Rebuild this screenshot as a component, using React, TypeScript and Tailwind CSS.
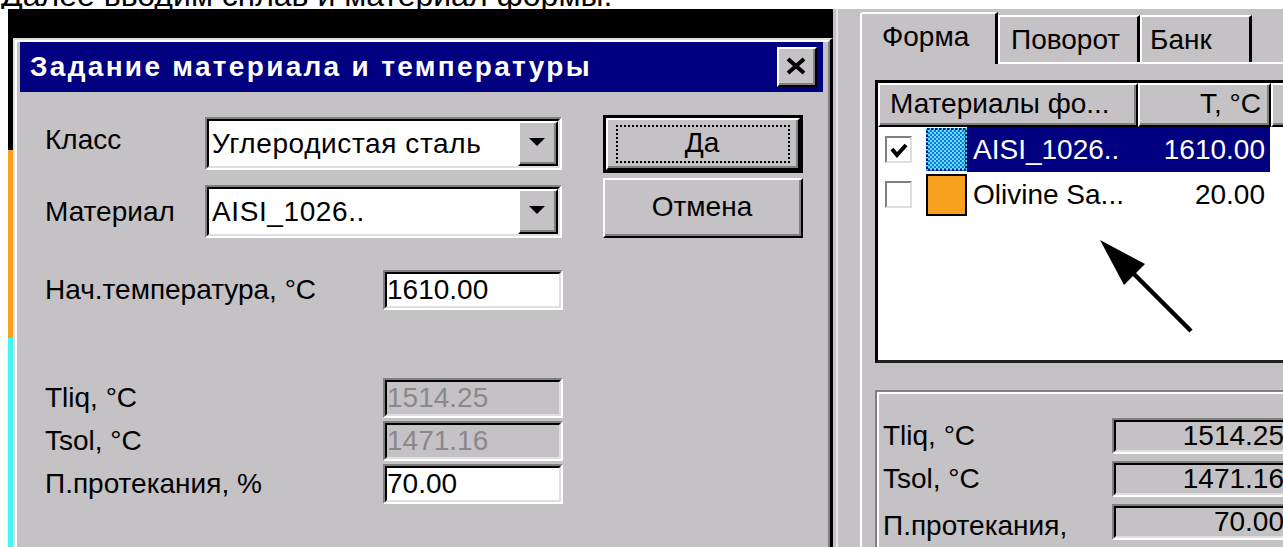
import type { ReactNode } from 'react'

// Classic 3D frames used all over the dialog
function Raised({ className = '', children }: { className?: string; children?: ReactNode }) {
  return (
    <div
      className={`border-t-2 border-l-2 border-r-2 border-b-2 border-t-white border-l-white border-r-black border-b-black ${className}`}
    >
      <div className="flex h-full w-full items-center justify-center border-r-2 border-b-2 border-r-[#808080] border-b-[#808080]">
        {children}
      </div>
    </div>
  )
}

function Sunken({ className = '', inner = '', children }: { className?: string; inner?: string; children?: ReactNode }) {
  return (
    <div
      className={`border-2 border-t-[#808080] border-l-[#808080] border-r-white border-b-white ${className}`}
    >
      <div
        className={`flex h-full w-full border-2 border-t-black border-l-black border-r-[#dfdfdf] border-b-[#dfdfdf] ${inner}`}
      >
        {children}
      </div>
    </div>
  )
}

function DropArrow() {
  return (
    <svg width="16" height="9" viewBox="0 0 16 9">
      <polygon points="0,0 16,0 8,8" fill="#000" />
    </svg>
  )
}

function Combo({ value }: { value: string }) {
  return (
    <Sunken className="h-[53px] w-[357px]" inner="bg-white">
      <span className="flex-1 self-center pl-[3px] tracking-[0.6px]">{value}</span>
      <Raised className="h-full w-[40px] bg-[#c4c2c5]">
        <DropArrow />
      </Raised>
    </Sunken>
  )
}

function Edit({ value, disabled, className = '' }: { value: string; disabled?: boolean; className?: string }) {
  return (
    <Sunken className={`h-[40px] w-[180px] ${className}`} inner={disabled ? 'bg-[#c4c2c5] text-[#8a888c]' : 'bg-white'}>
      <span className="self-center">{value}</span>
    </Sunken>
  )
}

function MaterialDialog() {
  return (
    <div className="flex-1 border-t-2 border-l-2 border-r-[3px] border-t-[#dfdfdf] border-l-[#dfdfdf] border-r-black bg-[#c4c2c5]">
      <div className="h-full border-t-2 border-l-2 border-r-2 border-t-white border-l-white border-r-[#808080] pl-[3px] pr-[5px]">
        {/* title bar */}
        <div className="flex h-[50px] items-center justify-between bg-[#000080] pl-[10px] pr-[6px]">
          <span className="text-[28px] font-bold tracking-[2.3px] text-white">Задание материала и температуры</span>
          <Raised className="h-[40px] w-[40px] bg-[#c4c2c5]">
            <svg width="22" height="18" viewBox="0 0 22 18">
              <path d="M3 2 L19 16 M19 2 L3 16" stroke="#000" strokeWidth="4" />
            </svg>
          </Raised>
        </div>

        <div className="pl-[25px] pt-[23px]">
          <div className="flex items-start">
            <div className="flex flex-col gap-[15px] pt-[2px]">
              <div className="flex items-center">
                <span className="w-[160px] -translate-y-[4px]">Класс</span>
                <Combo value="Углеродистая сталь" />
              </div>
              <div className="flex items-center">
                <span className="w-[160px]">Материал</span>
                <Combo value="AISI_1026.." />
              </div>
            </div>

            <div className="ml-[41px] flex w-[200px] flex-col gap-[5px]">
              <div className="h-[58px] border-[3px] border-black">
                <Raised className="relative h-full w-full bg-[#c4c2c5]">
                  <div className="absolute inset-x-[8px] inset-y-[5px] border-2 border-dotted border-black" />
                  <span>Да</span>
                </Raised>
              </div>
              <Raised className="h-[60px] w-full bg-[#c4c2c5]">
                <span>Отмена</span>
              </Raised>
            </div>
          </div>

          <div className="mt-[32px] flex items-center">
            <span className="w-[338px]">Нач.температура, °C</span>
            <Edit value="1610.00" />
          </div>

          <div className="mt-[68px] flex flex-col gap-[3px]">
            <div className="flex items-center">
              <span className="w-[338px]">Tliq, °C</span>
              <Edit value="1514.25" disabled />
            </div>
            <div className="flex items-center">
              <span className="w-[338px]">Tsol, °C</span>
              <Edit value="1471.16" disabled />
            </div>
            <div className="flex items-center">
              <span className="w-[338px]">П.протекания, %</span>
              <Edit value="70.00" />
            </div>
          </div>
        </div>
      </div>
    </div>
  )
}

function CheckBox({ checked }: { checked?: boolean }) {
  return (
    <div className="flex h-[27px] w-[27px] items-center justify-center border-2 border-t-[#808080] border-l-[#808080] border-r-[#dfdfdf] border-b-[#dfdfdf] bg-white">
      {checked && (
        <svg width="18" height="16" viewBox="0 0 18 16">
          <path d="M2 7 L7 13 L16 3" fill="none" stroke="#000" strokeWidth="4" />
        </svg>
      )}
    </div>
  )
}

function SteelSwatch() {
  return (
    <svg width="41" height="43" viewBox="0 0 41 43">
      <defs>
        <pattern id="dots" width="4" height="4" patternUnits="userSpaceOnUse">
          <rect width="4" height="4" fill="#1f6fe0" />
          <rect width="2" height="2" fill="#5fe6ff" />
          <rect x="2" y="2" width="2" height="2" fill="#5fe6ff" />
        </pattern>
      </defs>
      <rect width="41" height="43" fill="url(#dots)" />
      <rect x="1" y="1" width="39" height="41" fill="none" stroke="#0a1a60" strokeWidth="2" strokeDasharray="2 2" />
    </svg>
  )
}

function ReadOut({ value }: { value: string }) {
  return (
    <Sunken className="h-[36px] w-[182px]" inner="bg-[#c4c2c5] justify-end pr-[6px]">
      <span className="self-center">{value}</span>
    </Sunken>
  )
}

function FormPanel() {
  return (
    <div className="relative flex-1 overflow-hidden bg-[#c4c2c5] pl-[3px]">
      <div className="h-full border-l-2 border-l-[#e4e4e4] pl-[22px] pt-[3px]">
        {/* tabs */}
        <div className="flex h-[50px] items-end">
          <div className="relative z-10 -mb-[2px] flex h-[52px] w-[138px] shrink-0 items-center rounded-tl-[3px] border-t-2 border-l-2 border-r-[3px] border-t-white border-l-white border-r-black bg-[#c4c2c5] pb-[4px] pl-[20px]">
            Форма
          </div>
          <div className="flex h-[47px] w-[142px] shrink-0 items-center border-t-2 border-r-[3px] border-t-white border-r-black pl-[13px]">
            <span className="-ml-[13px] flex h-full items-center border-l-2 border-l-white pl-[11px]">Поворот</span>
          </div>
          <div className="flex h-[47px] w-[112px] shrink-0 items-center border-t-2 border-l-2 border-r-[3px] border-t-white border-l-white border-r-black pl-[8px]">
            Банк
          </div>
        </div>

        <div className="h-full border-t-2 border-l-2 border-t-white border-l-white pl-[13px] pt-[16px]">
          {/* material list */}
          <div className="relative h-[283px] w-[440px] border-[3px] border-t-black border-l-black border-b-[#202020] border-r-[#202020] bg-white">
            <div className="flex h-[44px] bg-[#c4c2c5]">
              <Raised className="h-full w-[260px] shrink-0">
                <span className="w-full pl-[10px]">Материалы фо...</span>
              </Raised>
              <Raised className="h-full w-[133px] shrink-0">
                <span className="w-full pr-[6px] text-right">T, °C</span>
              </Raised>
              <Raised className="h-full w-[60px] shrink-0" />
            </div>

            <div className="flex h-[45px] items-center">
              <div className="ml-[7px]">
                <CheckBox checked />
              </div>
              <div className="ml-[14px] h-[43px]">
                <SteelSwatch />
              </div>
              <div className="flex h-full w-[303px] items-center justify-between bg-[#000080] pl-[6px] pr-[5px] text-white">
                <span>AISI_1026..</span>
                <span>1610.00</span>
              </div>
            </div>

            <div className="flex h-[45px] items-center">
              <div className="ml-[7px]">
                <CheckBox />
              </div>
              <div className="ml-[14px] h-[42px] w-[41px] border-2 border-black bg-[#f8a11f]" />
              <div className="flex h-full w-[303px] items-center justify-between pl-[6px] pr-[5px]">
                <span>Olivine Sa...</span>
                <span>20.00</span>
              </div>
            </div>

            {/* pointer arrow */}
            <svg className="absolute left-[215px] top-[150px]" width="105" height="105" viewBox="0 0 105 105">
              <path d="M36 36 L98 98" stroke="#000" strokeWidth="4.5" />
              <polygon points="7,7 52,31 31,52" fill="#000" />
            </svg>
          </div>

          {/* temperatures group */}
          <div className="mt-[27px] w-[500px] border-t-2 border-l-2 border-t-[#808080] border-l-[#808080]">
            <div className="flex flex-col gap-[7px] border-t-2 border-l-2 border-t-white border-l-white pl-[4px] pt-[24px]">
              <div className="flex items-center">
                <span className="w-[229px]">Tliq, °C</span>
                <ReadOut value="1514.25" />
              </div>
              <div className="flex items-center">
                <span className="w-[229px]">Tsol, °C</span>
                <ReadOut value="1471.16" />
              </div>
              <div className="flex items-start">
                <span className="w-[229px] pt-[6px] leading-[32px]">
                  П.протекания,
                  <br />%
                </span>
                <ReadOut value="70.00" />
              </div>
            </div>
          </div>
        </div>
      </div>
    </div>
  )
}

export default function App() {
  return (
    <div className="h-[547px] w-[1283px] overflow-hidden bg-white font-['Liberation_Sans',Arial,sans-serif] text-[28px] leading-none text-black">
      <div className="h-[9px] overflow-hidden">
        <p className="mt-[-21px] whitespace-nowrap pl-[1px] text-[32px] leading-none">Далее вводим сплав и материал формы.</p>
      </div>
      <div className="flex h-[538px]">
        <div className="flex w-[833px] shrink-0 flex-col pl-[8px]">
          <div className="h-[29px] bg-black" />
          <div className="flex flex-1">
            <div className="flex w-[5px] flex-col">
              <div className="h-[112px] bg-black" />
              <div className="h-[188px] bg-[#f8a11f]" />
              <div className="flex-1 bg-[#3ff8f8]" />
            </div>
            <MaterialDialog />
          </div>
        </div>
        <FormPanel />
      </div>
    </div>
  )
}
